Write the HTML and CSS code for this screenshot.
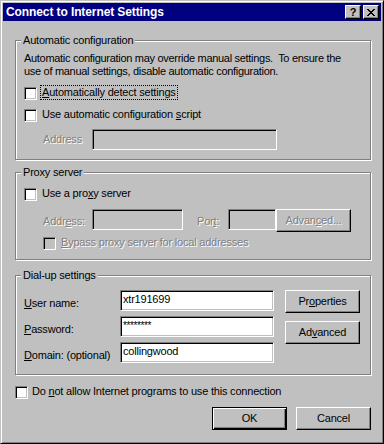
FILE: index.html
```html
<!DOCTYPE html>
<html>
<head>
<meta charset="utf-8">
<title>Connect to Internet Settings</title>
<link rel="stylesheet" href="styles.css">
</head>
<body>
<div class="window">
  <div class="titlebar">
    <span class="title">Connect to Internet Settings</span>
    <div class="tb-buttons">
      <span class="tb-btn help">?</span>
      <span class="tb-btn close"><svg width="8" height="7" viewBox="0 0 8 7" shape-rendering="crispEdges"><path d="M0 0h2v1H0zM6 0h2v1H6zM1 1h2v1H1zM5 1h2v1H5zM2 2h4v1H2zM3 3h2v1H3zM2 4h4v1H2zM1 5h2v1H1zM5 5h2v1H5zM0 6h2v1H0zM6 6h2v1H6z" fill="#000"/></svg></span>
    </div>
  </div>
  <div class="content">
    <div class="group g-auto">
      <div class="group-title">Automatic configuration</div>
      <p class="desc">Automatic configuration may override manual settings.&nbsp; To ensure the<br>use of manual settings, disable automatic configuration.</p>
      <div class="row r-detect">
        <span class="cb"></span><span class="lbl focus"><u>A</u>utomatically detect settings</span>
      </div>
      <div class="row r-script">
        <span class="cb"></span><span class="lbl">Use automatic configuration <u>s</u>cript</span>
      </div>
      <div class="row r-addr">
        <span class="flabel disabled">Address</span><span class="field disabled w-addr"></span>
      </div>
    </div>

    <div class="group g-proxy">
      <div class="group-title">Proxy server</div>
      <div class="row r-useproxy">
        <span class="cb"></span><span class="lbl">Use a pro<u>x</u>y server</span>
      </div>
      <div class="row r-paddr">
        <span class="flabel top disabled">Addr<u>e</u>ss:</span><span class="field disabled w-paddr"></span>
        <span class="flabel top disabled port-lbl">Por<u>t</u>:</span><span class="field disabled w-port"></span>
        <button class="btn disabled adv-proxy">Advan<u>c</u>ed...</button>
      </div>
      <div class="row r-bypass">
        <span class="cb disabled"></span><span class="lbl disabled"><u>B</u>ypass proxy server for local addresses</span>
      </div>
    </div>

    <div class="group g-dial">
      <div class="group-title">Dial-up settings</div>
      <div class="dial">
        <div class="dial-fields">
          <span class="dlabel"><u>U</u>ser name:</span><span class="field">xtr191699</span>
          <span class="dlabel"><u>P</u>assword:</span><span class="field pw">********</span>
          <span class="dlabel"><u>D</u>omain: (optional)</span><span class="field">collingwood</span>
        </div>
        <div class="dial-buttons">
          <button class="btn">Pr<u>o</u>perties</button>
          <button class="btn">Ad<u>v</u>anced</button>
        </div>
      </div>
    </div>

    <div class="row r-noallow">
      <span class="cb"></span><span class="lbl">Do <u>n</u>ot allow Internet programs to use this connection</span>
    </div>

    <div class="actions">
      <button class="btn default">OK</button>
      <button class="btn">Cancel</button>
    </div>
  </div>
</div>
</body>
</html>
```

FILE: styles.css
```css
* { box-sizing: border-box; }

body {
  margin: 0;
  background: #c0c0c0;
  font-family: "Liberation Sans", Arial, sans-serif;
  font-size: 11px;
  line-height: 13px;
  letter-spacing: -0.2px;
  color: #000;
}

.window {
  width: 384px;
  height: 444px;
  background: #c0c0c0;
  border: 1px solid;
  border-color: #c0c0c0 #000 #000 #c0c0c0;
  box-shadow: inset 1px 1px 0 #fff, inset -1px -1px 0 #808080;
  padding: 2px;
}

.titlebar {
  height: 18px;
  background: #000080;
  display: flex;
  align-items: center;
  padding: 0 2px 0 3px;
}

.title {
  flex: 1;
  color: #fff;
  font-weight: bold;
  font-size: 12px;
  line-height: 18px;
  letter-spacing: -0.1px;
  white-space: nowrap;
}

.tb-buttons {
  display: flex;
  gap: 2px;
}

.tb-btn {
  width: 16px;
  height: 14px;
  background: #c0c0c0;
  border: 1px solid;
  border-color: #fff #000 #000 #fff;
  box-shadow: inset -1px -1px 0 #808080;
  display: flex;
  align-items: center;
  justify-content: center;
  font-weight: bold;
  font-size: 11px;
  line-height: 12px;
  letter-spacing: 0;
}

.tb-btn svg { display: block; margin-left: -1px; }

.content {
  padding: 0 10px 0 12px;
}

.group {
  border: 1px solid #808080;
  box-shadow: 1px 1px 0 #fff, inset 1px 1px 0 #fff;
  padding: 0 10px 0 8px;
}

.group-title {
  display: table;
  margin: -7px 0 0 -3px;
  padding: 0 2px;
  background: #c0c0c0;
  white-space: nowrap;
}

.g-auto { margin-top: 19px; padding-bottom: 9px; }
.g-proxy { margin-top: 12px; padding-bottom: 9px; }
.g-dial { margin-top: 15px; padding-bottom: 11px; }

.desc {
  margin: 5px 0 0;
  white-space: nowrap;
  letter-spacing: -0.3px;
}

.row {
  display: flex;
  align-items: flex-start;
  white-space: nowrap;
}

.cb {
  flex: none;
  width: 13px;
  height: 13px;
  margin-top: 1px;
  background: #fff;
  border: 1px solid;
  border-color: #808080 #fff #fff #808080;
  box-shadow: inset 1px 1px 0 #000, inset -1px -1px 0 #c0c0c0;
}

.cb.disabled { background: #c0c0c0; }

.lbl { margin-left: 5px; }

.lbl.focus {
  margin-left: 4px;
  padding: 0 1px;
  outline: 1px dotted #000;
}

.disabled {
  color: #808080;
  text-shadow: 1px 1px 0 #fff;
}

.r-detect { margin-top: 8px; }
.r-script { margin-top: 8px; }

.r-addr {
  margin-top: 7px;
  padding-left: 19px;
  align-items: center;
}

.flabel {
  flex: none;
  width: 49px;
}

.flabel.top { padding-top: 6px; }

.field {
  flex: none;
  display: block;
  height: 21px;
  background: #fff;
  border: 1px solid;
  border-color: #808080 #fff #fff #808080;
  box-shadow: inset 1px 1px 0 #000, inset -1px -1px 0 #c0c0c0;
  padding: 0 2px;
  line-height: 17px;
  white-space: nowrap;
  overflow: hidden;
}

.field.pw {
  font-size: 10px;
  letter-spacing: -0.4px;
}

.field.disabled { background: #c0c0c0; text-shadow: none; }

.w-addr { width: 185px; }
.w-paddr { width: 91px; }
.w-port { width: 48px; }

.r-useproxy { margin-top: 8px; }
.r-paddr { margin-top: 8px; padding-left: 19px; }
.port-lbl { margin-left: 14px; width: 31px; }
.adv-proxy { margin-left: 9px; }

.r-bypass { margin-top: 4px; padding-left: 19px; }

.btn {
  flex: none;
  width: 75px;
  height: 23px;
  padding: 0;
  margin: 0;
  background: #c0c0c0;
  border: 1px solid;
  border-color: #fff #000 #000 #fff;
  box-shadow: inset -1px -1px 0 #808080;
  font: inherit;
  letter-spacing: inherit;
  color: #000;
  display: flex;
  align-items: center;
  justify-content: center;
  white-space: nowrap;
}

.btn.disabled { color: #808080; text-shadow: 1px 1px 0 #fff; }

.btn.default {
  border-color: #000;
  box-shadow: inset 1px 1px 0 #fff, inset -1px -1px 0 #000, inset -2px -2px 0 #808080;
}

.dial {
  display: flex;
  margin-top: 8px;
}

.dial-fields {
  display: grid;
  grid-template-columns: 96px 154px;
  row-gap: 5px;
}

.dlabel {
  padding-top: 7px;
  white-space: nowrap;
}

.dial-buttons {
  display: flex;
  flex-direction: column;
  gap: 8px;
  margin-left: 11px;
}

.r-noallow { margin-top: 10px; }
.r-noallow .lbl { margin-left: 4px; }

.actions {
  display: flex;
  justify-content: flex-end;
  gap: 9px;
  margin-top: 8px;
}
```
